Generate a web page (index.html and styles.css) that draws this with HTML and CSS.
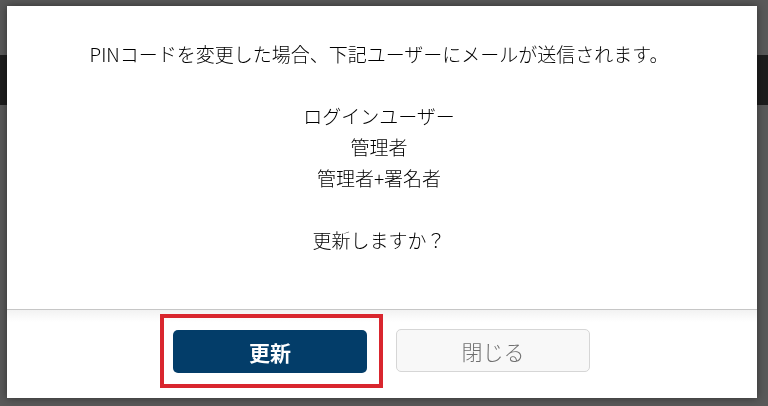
FILE: index.html
```html
<!DOCTYPE html>
<html lang="ja">
<head>
    <meta charset="UTF-8">
    <meta name="viewport" content="width=device-width, initial-scale=1.0">
    <title>PINコード変更</title>
    <link rel="stylesheet" href="styles.css">
</head>
<body>
    <div class="page">
        <div class="page-top"></div>
        <div class="page-header"></div>
        <div class="page-content"></div>
    </div>

    <div class="modal">
        <div class="modal-body">
            <p class="message">
                PINコードを変更した場合、下記ユーザーにメールが送信されます。<br>
                <br>
                ログインユーザー<br>
                管理者<br>
                管理者+署名者<br>
                <br>
                更新しますか？
            </p>
        </div>
        <div class="modal-footer">
            <span class="highlight">
                <button class="btn btn-primary">更新</button>
            </span>
            <button class="btn btn-close">閉じる</button>
        </div>
    </div>
</body>
</html>
```

FILE: styles.css
```css
html, body {
    margin: 0;
    padding: 0;
    height: 100%;
}
body {
    font-family: "Noto Sans CJK JP", "Noto Sans", sans-serif;
    background-color: #595959;
    overflow: hidden;
}
.page-top {
    height: 55px;
}
.page-header {
    height: 50px;
    background-color: #1d1d1d;
}
.modal {
    position: fixed;
    left: 7px;
    top: 6px;
    width: 750px;
    height: 392px;
    background-color: #fff;
    box-shadow: 0 0 8px rgba(0, 0, 0, 0.45);
    display: flex;
    flex-direction: column;
}
.modal-body {
    height: 303px;
    padding: 32px 6px 0 0;
    box-sizing: border-box;
}
.message {
    margin: 0;
    text-align: center;
    font-size: 19px;
    font-weight: 300;
    line-height: 31px;
    color: #000;
}
.modal-footer {
    flex: 1;
    border-top: 1px solid #c6c6c6;
    background: linear-gradient(#f2f2f2, #fff 12px);
    display: flex;
    align-items: flex-start;
    padding: 4px 0 0 153px;
    gap: 13px;
}
.highlight {
    display: block;
    border: 4px solid #d9262e;
    padding: 12px 12px 11px 9px;
}
.btn {
    display: block;
    width: 194px;
    height: 43px;
    border-radius: 5px;
    font-family: inherit;
    font-size: 21px;
    cursor: pointer;
}
.btn-primary {
    background-color: #033d69;
    border: none;
    color: #fff;
    font-weight: bold;
}
.btn-close {
    margin-top: 15px;
    background-color: #f8f8f8;
    border: 1px solid #d6d6d6;
    color: #707070;
    font-weight: 300;
}
```
